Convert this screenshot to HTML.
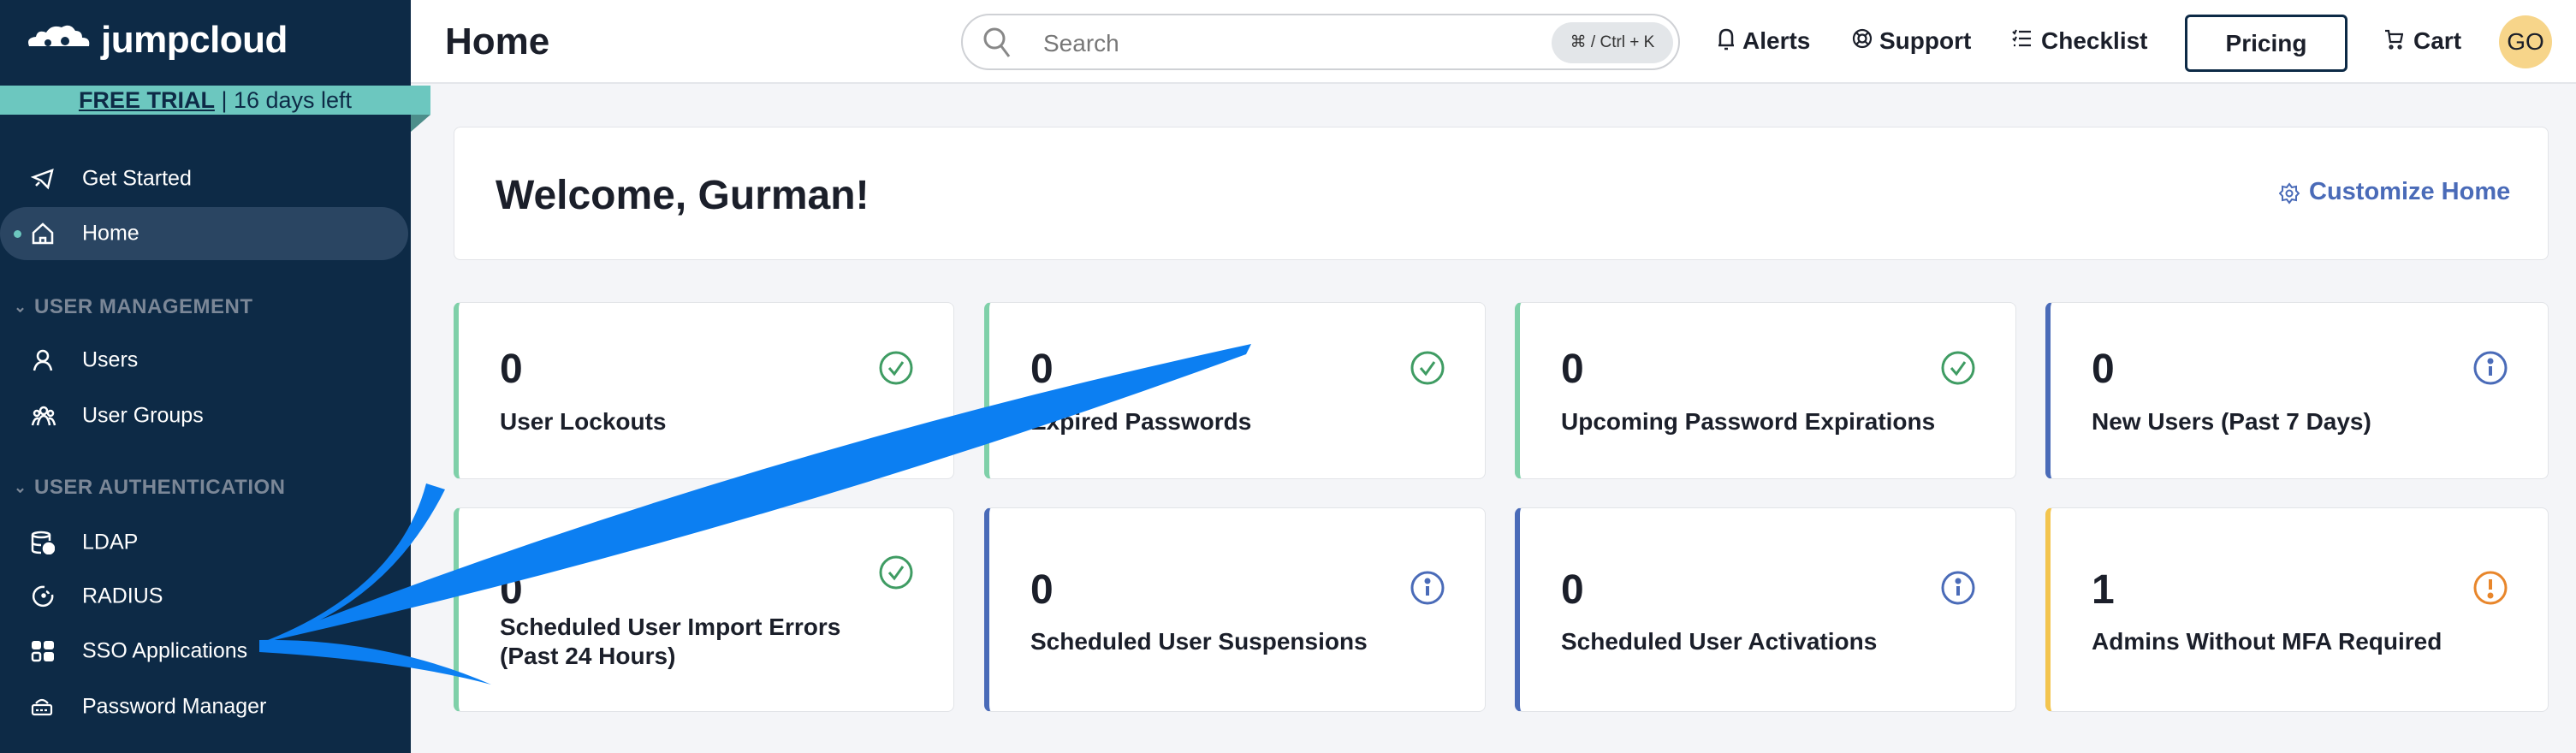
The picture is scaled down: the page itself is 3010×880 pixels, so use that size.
<!DOCTYPE html>
<html><head><meta charset="utf-8"><style>
*{box-sizing:border-box;margin:0;padding:0}
body{width:3010px;height:880px;overflow:hidden;background:#f4f5f8;font-family:"Liberation Sans",sans-serif;position:relative}
.side{position:absolute;left:0;top:0;width:480px;height:880px;background:#0d2a46;color:#fff}
.logo{position:absolute;left:30px;top:22px;font-size:44px;font-weight:bold;letter-spacing:-0.5px}
.trial{position:absolute;left:0;top:100px;width:503px;height:34px;background:#6cc7bf;color:#0d2a46;font-size:27px;text-align:center;line-height:34px}
.fold{position:absolute;left:480px;top:134px;width:0;height:0;border-top:20px solid #4c8e8a;border-right:23px solid transparent}
.nav{position:absolute;left:96px;font-size:25px;color:#fff;transform:translateY(-50%)}
.sec{position:absolute;left:40px;font-size:24px;color:#7b8797;font-weight:bold;letter-spacing:0.5px;transform:translateY(-50%)}
.ico{position:absolute;left:36px;transform:translateY(-50%)}
.pill{position:absolute;left:0;top:242px;width:477px;height:62px;background:#2a4562;border-radius:31px}
.top{position:absolute;left:480px;top:0;width:2530px;height:98px;background:#fff;border-bottom:2px solid #e4e6ea}
.title{position:absolute;left:520px;top:24px;font-size:44px;font-weight:bold;color:#1b1f2a}
.search{position:absolute;left:1123px;top:16px;width:840px;height:66px;border:2px solid #cfd1d5;border-radius:33px;background:#fff}
.kbd{position:absolute;right:6px;top:8px;width:142px;height:48px;background:#e3e6e9;border-radius:24px;font-size:19px;color:#333;text-align:center;line-height:48px}
.tl{position:absolute;top:32px;font-size:28px;color:#1b1f2a;font-weight:bold}
.card{position:absolute;background:#fff;border:1px solid #e2e4e8;border-radius:8px}
.num{position:absolute;left:48px;font-size:48px;font-weight:bold;color:#1b1f2a}
.lab{position:absolute;left:48px;font-size:28px;font-weight:bold;color:#1b1f2a;line-height:34px}
.st{position:absolute;right:46px}
</style></head><body>
<div class="side">
 <svg style="position:absolute;left:30px;top:26px" width="80" height="30" viewBox="0 0 80 30"><path d="M4,28 Q0,18 12,17 Q14,8 24,12 Q30,2 42,6 Q52,0 58,10 Q66,10 66,18 Q76,18 74,28 Z" fill="#fff"/><circle cx="26" cy="24" r="4" fill="#0d2a46"/><circle cx="46" cy="22" r="5" fill="#0d2a46"/></svg>
 <div class="logo" style="left:118px">jumpcloud</div>
 <div class="trial"><b style="text-decoration:underline">FREE TRIAL</b> | 16 days left</div>
 <div class="fold"></div>
 <div class="pill"></div>
 <div style="position:absolute;left:16px;top:269px;width:9px;height:9px;border-radius:50%;background:#6cc7bf"></div>
 <svg class="ico" style="top:209px" width="28" height="28" viewBox="0 0 28 28" fill="none" stroke="#fff" stroke-width="2.5"><path d="M3,12 L25,4 L20,24 L12,16 Z M3,12 L12,16 M6,22 L10,18"/></svg>
 <div class="nav" style="top:209px">Get Started</div>
 <svg class="ico" style="top:273px" width="28" height="28" viewBox="0 0 28 28" fill="none" stroke="#fff" stroke-width="2.5"><path d="M3,13 L14,3 L25,13 V25 H3 Z M11,25 V19 H17 V25"/></svg>
 <div class="nav" style="top:273px">Home</div>
 <div class="sec" style="top:359px;left:16px;font-size:18px">&#8964;</div>
 <div class="sec" style="top:359px">USER MANAGEMENT</div>
 <svg class="ico" style="top:421px" width="28" height="28" viewBox="0 0 28 28" fill="none" stroke="#fff" stroke-width="2.5"><circle cx="14" cy="9" r="6"/><path d="M4,26 Q6,16 14,16 Q22,16 24,26"/></svg>
 <div class="nav" style="top:421px">Users</div>
 <svg class="ico" style="top:486px" width="30" height="26" viewBox="0 0 30 26" fill="none" stroke="#fff" stroke-width="2.5"><circle cx="15" cy="7" r="4"/><circle cx="7" cy="10" r="3"/><circle cx="23" cy="10" r="3"/><path d="M2,24 Q4,15 9,16 M8,24 Q10,13 15,13 Q20,13 22,24 M21,16 Q26,15 28,24"/></svg>
 <div class="nav" style="top:486px">User Groups</div>
 <div class="sec" style="top:570px;left:16px;font-size:18px">&#8964;</div>
 <div class="sec" style="top:570px">USER AUTHENTICATION</div>
 <svg class="ico" style="top:634px" width="28" height="28" viewBox="0 0 28 28" fill="none" stroke="#fff" stroke-width="2.5"><ellipse cx="12" cy="5" rx="10" ry="3"/><path d="M2,5 V23 Q2,26 12,26 M22,5 V12 M2,14 Q2,17 12,17"/><circle cx="21" cy="21" r="6" fill="#fff"/></svg>
 <div class="nav" style="top:634px">LDAP</div>
 <svg class="ico" style="top:697px" width="28" height="28" viewBox="0 0 28 28" fill="none" stroke="#fff" stroke-width="2.5"><path d="M16,3 A11,11 0 1 0 25,12"/><path d="M18,8 A5,5 0 0 1 21,11"/><circle cx="15" cy="13" r="1.5" fill="#fff"/></svg>
 <div class="nav" style="top:697px">RADIUS</div>
 <svg class="ico" style="top:761px" width="28" height="28" viewBox="0 0 28 28"><rect x="1" y="2" width="11" height="10" rx="3" fill="#fff"/><rect x="15" y="2" width="12" height="10" rx="3" fill="#fff"/><rect x="2" y="16" width="9" height="9" rx="2" fill="none" stroke="#fff" stroke-width="2.5"/><rect x="15" y="15" width="12" height="11" rx="3" fill="#fff"/></svg>
 <div class="nav" style="top:761px">SSO Applications</div>
 <svg class="ico" style="top:826px" width="26" height="24" viewBox="0 0 26 24" fill="none" stroke="#fff" stroke-width="2.2"><path d="M6,8 Q13,0 20,8"/><rect x="2" y="10" width="22" height="11" rx="2"/><path d="M6,16 H20" stroke-dasharray="3 2"/></svg>
 <div class="nav" style="top:826px">Password Manager</div>
</div>
<div class="top"></div>
<div class="title">Home</div>
<div class="search">
 <svg style="position:absolute;left:22px;top:12px" width="36" height="40" viewBox="0 0 36 40" fill="none" stroke="#888" stroke-width="3"><circle cx="15" cy="15" r="11"/><path d="M23,24 L32,36"/></svg>
 <div style="position:absolute;left:94px;top:17px;font-size:28px;color:#777">Search</div>
 <div class="kbd">⌘ / Ctrl + K</div>
</div>
<svg style="position:absolute;left:2006px;top:31px" width="22" height="30" viewBox="0 0 22 30" fill="none" stroke="#1b1f2a" stroke-width="2.5"><path d="M4,22 V12 Q4,4 11,4 Q18,4 18,12 V22 H2 H20 M9,26 H13"/></svg>
<div class="tl" style="left:2036px">Alerts</div>
<svg style="position:absolute;left:2164px;top:33px" width="24" height="24" viewBox="0 0 24 24" fill="none" stroke="#1b1f2a" stroke-width="2.2"><circle cx="12" cy="12" r="10"/><circle cx="12" cy="12" r="4.5"/><path d="M5,5 L9,9 M19,5 L15,9 M5,19 L9,15 M19,19 L15,15"/></svg>
<div class="tl" style="left:2196px">Support</div>
<svg style="position:absolute;left:2350px;top:33px" width="24" height="24" viewBox="0 0 24 24" fill="none" stroke="#1b1f2a" stroke-width="2.2"><path d="M9,4 H23 M9,12 H23 M9,20 H23 M2,4 L4,6 L6,2 M2,12 L4,14 L6,10 M3,20 H5"/></svg>
<div class="tl" style="left:2385px">Checklist</div>
<div style="position:absolute;left:2553px;top:17px;width:190px;height:67px;border:3px solid #0d2a46;border-radius:6px;background:#fff;font-size:28px;font-weight:bold;text-align:center;line-height:61px;color:#1b1f2a">Pricing</div>
<svg style="position:absolute;left:2786px;top:34px" width="22" height="24" viewBox="0 0 22 24" fill="none" stroke="#1b1f2a" stroke-width="2.2"><path d="M1,2 H5 L7,15 H19 L21,6 H6"/><circle cx="8" cy="21" r="1.5"/><circle cx="18" cy="21" r="1.5"/></svg>
<div class="tl" style="left:2820px">Cart</div>
<div style="position:absolute;left:2920px;top:18px;width:62px;height:62px;border-radius:50%;background:#f7d58a;font-size:28px;text-align:center;line-height:62px;color:#1b1f2a">GO</div>

<div class="card" style="left:530px;top:148px;width:2448px;height:156px">
 <div style="position:absolute;left:48px;top:52px;font-size:48px;font-weight:bold;color:#1b1f2a">Welcome, Gurman!</div>
 <svg style="position:absolute;left:2132px;top:64px" width="24" height="26" viewBox="0 0 24 26" fill="none" stroke="#4a6bb8" stroke-width="2"><path d="M12,2 L15,6 L20,5 L20,10 L23,13 L20,16 L20,21 L15,20 L12,24 L9,20 L4,21 L4,16 L1,13 L4,10 L4,5 L9,6 Z"/><circle cx="12" cy="13" r="3.5"/></svg>
 <div style="position:absolute;left:2167px;top:59px;font-size:29px;font-weight:bold;color:#4a6bb8">Customize Home</div>
</div>

<div class="card" style="left:530px;top:353px;width:585px;height:207px;border-left:6px solid #7fd0a9">
 <div class="num" style="top:50px">0</div><div class="lab" style="top:122px">User Lockouts</div>
 <svg class="st" style="top:55px" width="42" height="42" viewBox="0 0 42 42" fill="none" stroke="#3f9c63" stroke-width="3"><circle cx="21" cy="21" r="18"/><path d="M13,21 L19,28 L29,14"/></svg></div>
<div class="card" style="left:1150px;top:353px;width:586px;height:207px;border-left:6px solid #7fd0a9">
 <div class="num" style="top:50px">0</div><div class="lab" style="top:122px">Expired Passwords</div>
 <svg class="st" style="top:55px" width="42" height="42" viewBox="0 0 42 42" fill="none" stroke="#3f9c63" stroke-width="3"><circle cx="21" cy="21" r="18"/><path d="M13,21 L19,28 L29,14"/></svg></div>
<div class="card" style="left:1770px;top:353px;width:586px;height:207px;border-left:6px solid #7fd0a9">
 <div class="num" style="top:50px">0</div><div class="lab" style="top:122px">Upcoming Password Expirations</div>
 <svg class="st" style="top:55px" width="42" height="42" viewBox="0 0 42 42" fill="none" stroke="#3f9c63" stroke-width="3"><circle cx="21" cy="21" r="18"/><path d="M13,21 L19,28 L29,14"/></svg></div>
<div class="card" style="left:2390px;top:353px;width:588px;height:207px;border-left:6px solid #4a6bb8">
 <div class="num" style="top:50px">0</div><div class="lab" style="top:122px">New Users (Past 7 Days)</div>
 <svg class="st" style="top:55px" width="42" height="42" viewBox="0 0 42 42" fill="none" stroke="#4a6bb8" stroke-width="3"><circle cx="21" cy="21" r="18"/><path d="M21,19 V30" stroke-width="4"/><circle cx="21" cy="13" r="2" fill="#4a6bb8"/></svg></div>
<div class="card" style="left:530px;top:593px;width:585px;height:239px;border-left:6px solid #7fd0a9">
 <div class="num" style="top:68px">0</div><div class="lab" style="top:122px">Scheduled User Import Errors<br>(Past 24 Hours)</div>
 <svg class="st" style="top:54px" width="42" height="42" viewBox="0 0 42 42" fill="none" stroke="#3f9c63" stroke-width="3"><circle cx="21" cy="21" r="18"/><path d="M13,21 L19,28 L29,14"/></svg></div>
<div class="card" style="left:1150px;top:593px;width:586px;height:239px;border-left:6px solid #4a6bb8">
 <div class="num" style="top:68px">0</div><div class="lab" style="top:139px">Scheduled User Suspensions</div>
 <svg class="st" style="top:72px" width="42" height="42" viewBox="0 0 42 42" fill="none" stroke="#4a6bb8" stroke-width="3"><circle cx="21" cy="21" r="18"/><path d="M21,19 V30" stroke-width="4"/><circle cx="21" cy="13" r="2" fill="#4a6bb8"/></svg></div>
<div class="card" style="left:1770px;top:593px;width:586px;height:239px;border-left:6px solid #4a6bb8">
 <div class="num" style="top:68px">0</div><div class="lab" style="top:139px">Scheduled User Activations</div>
 <svg class="st" style="top:72px" width="42" height="42" viewBox="0 0 42 42" fill="none" stroke="#4a6bb8" stroke-width="3"><circle cx="21" cy="21" r="18"/><path d="M21,19 V30" stroke-width="4"/><circle cx="21" cy="13" r="2" fill="#4a6bb8"/></svg></div>
<div class="card" style="left:2390px;top:593px;width:588px;height:239px;border-left:6px solid #f3c54f">
 <div class="num" style="top:68px">1</div><div class="lab" style="top:139px">Admins Without MFA Required</div>
 <svg class="st" style="top:72px" width="42" height="42" viewBox="0 0 42 42" fill="none" stroke="#e8862b" stroke-width="3"><circle cx="21" cy="21" r="18"/><path d="M21,11 V23" stroke-width="4"/><circle cx="21" cy="30" r="2" fill="#e8862b"/></svg></div>

<svg style="position:absolute;left:0;top:0" width="3010" height="880" viewBox="0 0 3010 880">
 <path d="M1462,402 Q860,532 303,752 Q900,618 1456,414 Z" fill="#0c7ff2"/>
 <path d="M498,565 Q465,690 303,752 Q450,712 520,572 Z" fill="#0c7ff2"/>
 <path d="M303,748 Q450,746 574,800 Q470,772 303,762 Z" fill="#0c7ff2"/>
</svg>
</body></html>
